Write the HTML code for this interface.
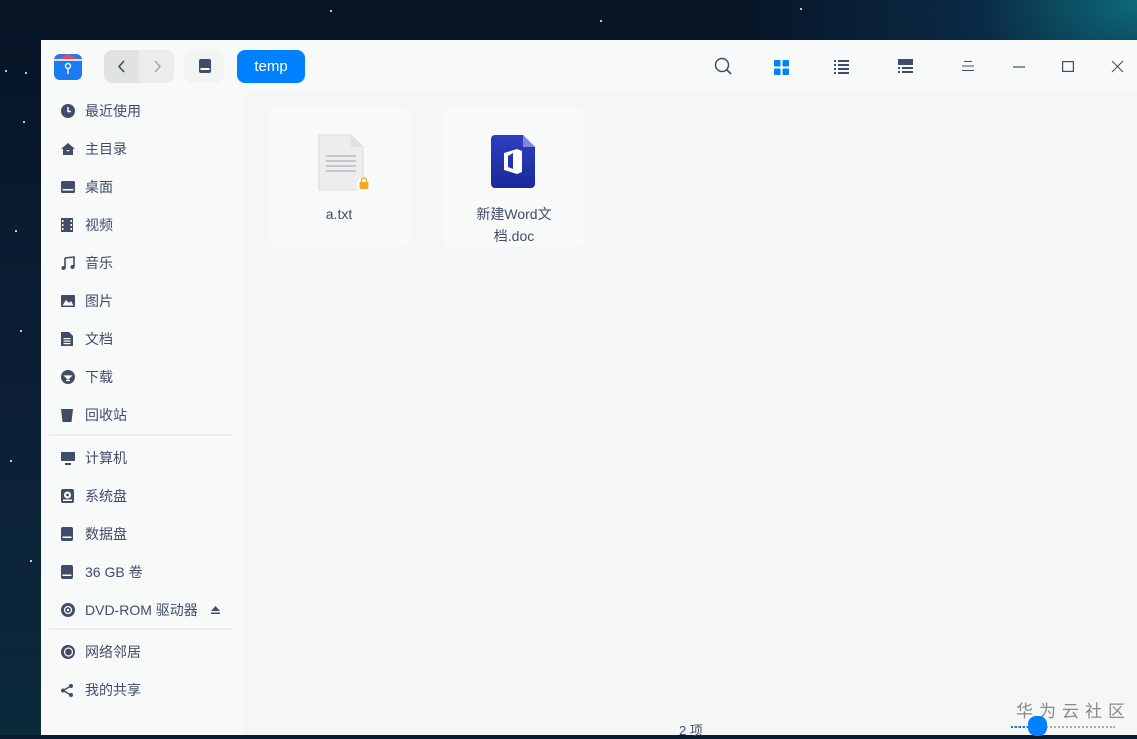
<!DOCTYPE html>
<html><head><meta charset="utf-8"><style>
*{margin:0;padding:0;box-sizing:border-box}
body{width:1137px;height:735px;overflow:hidden;background:#0b1a2e;font-family:"Liberation Sans","Noto Sans CJK SC",sans-serif;position:relative}
.bg{position:absolute;inset:0;background:radial-gradient(ellipse at 100% 0%,#0d6a7a 0,#0b2a45 10%,transparent 25%),linear-gradient(180deg,#071426,#0c2038 60%,#0a2a3a)}
.star{position:absolute;width:2px;height:2px;background:#fff;border-radius:50%}
.win{position:absolute;left:41px;top:40px;right:0;bottom:0;background:#f6f7f7}
.title{position:absolute;left:0;top:0;right:0;height:52px;background:#f8f9f9}
.side{position:absolute;left:0;top:52px;width:201px;bottom:0;background:#f8f9f9}
.main{position:absolute;left:201px;top:52px;right:0;bottom:0;background:#f5f6f6}
.item{position:absolute;left:0;height:38px;width:201px;display:flex;align-items:center;font-size:14px;color:#414d68}
.item svg{position:absolute;left:20px}
.item span{position:absolute;left:44px}
.sep{position:absolute;left:8px;width:183px;height:2px;background:#ececec}
.card{position:absolute;top:15px;width:142px;height:140px;background:#f8f9f9;border-radius:10px}
.lbl{position:absolute;left:0;right:0;text-align:center;font-size:14px;color:#414d68;line-height:22px}
</style></head><body>
<div class="bg"></div>
<div class="star" style="left:23px;top:121px"></div><div class="star" style="left:5px;top:70px"></div><div class="star" style="left:25px;top:72px"></div><div class="star" style="left:20px;top:330px"></div><div class="star" style="left:10px;top:460px"></div><div class="star" style="left:30px;top:560px"></div><div class="star" style="left:15px;top:230px"></div><div class="star" style="left:330px;top:10px"></div><div class="star" style="left:600px;top:20px"></div><div class="star" style="left:800px;top:8px"></div>
<div class="win">
<div class="title">
 <svg style="position:absolute;left:12px;top:11px" width="30" height="30" viewBox="0 0 30 30"><rect x="1" y="3" width="28" height="26" rx="6" fill="#1a7cf0"/><path d="M3 9 L15 3 L27 9Z" fill="#e74c5a"/><rect x="1" y="8" width="28" height="2" fill="#cfe3ff"/><circle cx="15" cy="15" r="2.5" fill="none" stroke="#fff" stroke-width="1.4"/><line x1="15" y1="17.5" x2="15" y2="23" stroke="#fff" stroke-width="1.4"/></svg>
 <div style="position:absolute;left:63px;top:10px;width:70px;height:33px;border-radius:8px;background:#ececec;overflow:hidden"><div style="width:35px;height:33px;background:#e1e2e2"></div>
 <svg style="position:absolute;left:12px;top:10px" width="12" height="13"><path d="M8 1 L3 6.5 L8 12" stroke="#414d68" stroke-width="1.6" fill="none"/></svg>
 <svg style="position:absolute;left:47px;top:10px" width="12" height="13"><path d="M4 1 L9 6.5 L4 12" stroke="#a0a4aa" stroke-width="1.4" fill="none"/></svg></div>
 <div style="position:absolute;left:143px;top:10px;width:40px;height:33px;border-radius:8px;background:#f2f3f3"></div>
 <svg style="position:absolute;left:158px;top:19px" width="12" height="14"><rect x="0" y="0" width="12" height="14" rx="2" fill="#414d68"/><rect x="1.5" y="9" width="9" height="2" fill="#fff"/></svg>
 <div style="position:absolute;left:196px;top:10px;width:68px;height:33px;border-radius:8px;background:#0081ff;color:#fff;font-size:15px;text-align:center;line-height:33px">temp</div>
 <svg style="position:absolute;left:673px;top:17px" width="19" height="19"><circle cx="8" cy="8" r="6.5" stroke="#414d68" stroke-width="1.5" fill="none"/><line x1="12.5" y1="12.5" x2="17" y2="17" stroke="#414d68" stroke-width="1.6"/></svg>
 <svg style="position:absolute;left:733px;top:20px" width="15" height="15"><rect x="0" y="0" width="6.5" height="6.5" rx="1" fill="#0081ff"/><rect x="8.5" y="0" width="6.5" height="6.5" rx="1" fill="#0081ff"/><rect x="0" y="8.5" width="6.5" height="6.5" rx="1" fill="#0081ff"/><rect x="8.5" y="8.5" width="6.5" height="6.5" rx="1" fill="#0081ff"/></svg>
 <svg style="position:absolute;left:793px;top:20px" width="15" height="14" fill="#414d68"><rect x="0" y="0" width="2" height="2"/><rect x="4" y="0" width="11" height="2"/><rect x="0" y="4" width="2" height="2"/><rect x="4" y="4" width="11" height="2"/><rect x="0" y="8" width="2" height="2"/><rect x="4" y="8" width="11" height="2"/><rect x="0" y="12" width="2" height="2"/><rect x="4" y="12" width="11" height="2"/></svg>
 <svg style="position:absolute;left:857px;top:19px" width="15" height="15" fill="#414d68"><rect x="0" y="0" width="15" height="6"/><rect x="0" y="8" width="2" height="2"/><rect x="4" y="8" width="11" height="2"/><rect x="0" y="12" width="2" height="2"/><rect x="4" y="12" width="11" height="2"/></svg>
 <svg style="position:absolute;left:921px;top:20px" width="12" height="12" stroke="#414d68" stroke-width="1"><line x1="2" y1="1.5" x2="10" y2="1.5"/><line x1="0" y1="6" x2="12" y2="6"/><line x1="0" y1="10.5" x2="12" y2="10.5"/></svg>
 <svg style="position:absolute;left:972px;top:26px" width="12" height="2"><line x1="0" y1="1" x2="12" y2="1" stroke="#414d68" stroke-width="1.2"/></svg>
 <svg style="position:absolute;left:1021px;top:21px" width="12" height="11"><rect x=".6" y=".6" width="10.8" height="9.8" stroke="#414d68" stroke-width="1.2" fill="none"/></svg>
 <svg style="position:absolute;left:1070px;top:20px" width="13" height="13" stroke="#414d68" stroke-width="1.1"><line x1="1" y1="1" x2="12" y2="12"/><line x1="12" y1="1" x2="1" y2="12"/></svg>
</div>
<div class="side">
 <div class="item" style="top:0"><svg width="14" height="14"><circle cx="7" cy="7" r="7" fill="#414d68"/><path d="M7 3V7.5H10" stroke="#fff" stroke-width="1.5" fill="none"/></svg><span>最近使用</span></div>
 <div class="item" style="top:38px"><svg width="14" height="14"><path d="M7 1 L14 7 H12 V13 H2 V7 H0Z" fill="#414d68"/><path d="M5 8 Q7 11 9 8" fill="#fff"/></svg><span>主目录</span></div>
 <div class="item" style="top:76px"><svg width="14" height="12"><rect width="14" height="12" rx="1.5" fill="#414d68"/><rect x="1.5" y="8" width="11" height="1.5" fill="#fff"/></svg><span>桌面</span></div>
 <div class="item" style="top:114px"><svg width="12" height="14"><rect width="12" height="14" fill="#414d68"/><g fill="#fff"><rect x="1" y="2" width="1.5" height="2"/><rect x="1" y="6" width="1.5" height="2"/><rect x="1" y="10" width="1.5" height="2"/><rect x="9.5" y="2" width="1.5" height="2"/><rect x="9.5" y="6" width="1.5" height="2"/><rect x="9.5" y="10" width="1.5" height="2"/></g></svg><span>视频</span></div>
 <div class="item" style="top:152px"><svg width="14" height="14"><path d="M4 2 L13 1 V11" stroke="#414d68" stroke-width="1.6" fill="none"/><path d="M4 2V12" stroke="#414d68" stroke-width="1.6"/><circle cx="2.5" cy="12" r="2" fill="#414d68"/><circle cx="11.5" cy="11" r="2" fill="#414d68"/></svg><span>音乐</span></div>
 <div class="item" style="top:190px"><svg width="14" height="12"><rect width="14" height="12" rx="1" fill="#414d68"/><path d="M1.5 10.5 L5 5 L8 8 L10 6 L12.5 10.5Z" fill="#fff"/></svg><span>图片</span></div>
 <div class="item" style="top:228px"><svg width="12" height="14"><path d="M0 0H8L12 4V14H0Z" fill="#414d68"/><g fill="#fff"><rect x="2.5" y="6" width="7" height="1.2"/><rect x="2.5" y="8.5" width="7" height="1.2"/><rect x="2.5" y="11" width="7" height="1.2"/></g></svg><span>文档</span></div>
 <div class="item" style="top:266px"><svg width="14" height="14"><circle cx="7" cy="7" r="7" fill="#414d68"/><path d="M4 6 L7 9 L10 6Z M5 10.5H9" stroke="#fff" stroke-width="1.3" fill="#fff"/></svg><span>下载</span></div>
 <div class="item" style="top:304px"><svg width="12" height="14"><path d="M0 1H12L10.5 14H1.5Z" fill="#414d68"/></svg><span>回收站</span></div>
 <div class="sep" style="top:342px"></div>
 <div class="item" style="top:347px"><svg width="14" height="13"><rect width="14" height="9" rx="1" fill="#414d68"/><rect x="4" y="11" width="6" height="2" fill="#414d68"/></svg><span>计算机</span></div>
 <div class="item" style="top:385px"><svg width="13" height="14"><rect width="13" height="14" rx="2" fill="#414d68"/><circle cx="6.5" cy="6" r="3.5" fill="#fff"/><circle cx="6.5" cy="6" r="1.4" fill="#414d68"/><rect x="2" y="10.5" width="9" height="1.5" fill="#fff"/></svg><span>系统盘</span></div>
 <div class="item" style="top:423px"><svg width="12" height="14"><rect width="12" height="14" rx="2" fill="#414d68"/><rect x="1.5" y="9.5" width="9" height="1.5" fill="#fff"/></svg><span>数据盘</span></div>
 <div class="item" style="top:461px"><svg width="12" height="14"><rect width="12" height="14" rx="2" fill="#414d68"/><rect x="1.5" y="9.5" width="9" height="1.5" fill="#fff"/></svg><span>36 GB 卷</span></div>
 <div class="item" style="top:499px"><svg width="14" height="14"><circle cx="7" cy="7" r="7" fill="#414d68"/><circle cx="7" cy="7" r="3.5" fill="none" stroke="#fff" stroke-width="1.2"/><circle cx="7" cy="7" r="1.2" fill="#fff"/></svg><span>DVD-ROM 驱动器</span><svg style="left:170px" width="9" height="8"><path d="M4.5 0 L9 5H0Z M0 6.5H9V8H0Z" fill="#414d68"/></svg></div>
 <div class="sep" style="top:536px"></div>
 <div class="item" style="top:541px"><svg width="14" height="14"><circle cx="7" cy="7" r="7" fill="#414d68"/><circle cx="7.5" cy="7" r="4" fill="none" stroke="#fff" stroke-width="1.2"/></svg><span>网络邻居</span></div>
 <div class="item" style="top:579px"><svg width="12" height="13"><circle cx="2" cy="6.5" r="2" fill="#414d68"/><circle cx="10" cy="2" r="2" fill="#414d68"/><circle cx="10" cy="11" r="2" fill="#414d68"/><path d="M2 6.5 L10 2 M2 6.5 L10 11" stroke="#414d68" stroke-width="1.5"/></svg><span>我的共享</span></div>
</div>
<div class="main">
 <div class="card" style="left:26px">
  <svg style="position:absolute;left:50px;top:27px" width="55" height="60"><path d="M1 1H33L45 13V56H1Z" fill="#ededed" stroke="#dcdcdc"/><path d="M33 1V13H45" fill="#e0e0e0"/><g stroke="#9aa1ac" stroke-width="1"><line x1="8" y1="22" x2="38" y2="22"/><line x1="8" y1="27" x2="38" y2="27"/><line x1="8" y1="32" x2="38" y2="32"/><line x1="8" y1="37" x2="38" y2="37"/></g><circle cx="46" cy="51" r="7" fill="#fff"/><rect x="41.5" y="48" width="9" height="7" rx="1" fill="#f5a623"/><path d="M43.5 48V46.5A2.5 2.5 0 0 1 48.5 46.5V48" stroke="#f5a623" stroke-width="1.3" fill="none"/></svg>
  <div class="lbl" style="top:96px">a.txt</div>
 </div>
 <div class="card" style="left:201px">
  <svg style="position:absolute;left:48px;top:27px" width="46" height="56"><defs><linearGradient id="g" x1="0" y1="0" x2="0" y2="1"><stop offset="0" stop-color="#2d3fc0"/><stop offset="1" stop-color="#1a2a9a"/></linearGradient></defs><path d="M4 1H32L44 13V50A4 4 0 0 1 40 54H4A4 4 0 0 1 0 50V5A4 4 0 0 1 4 1Z" fill="url(#g)"/><path d="M32 1V13H44" fill="#7c88d8"/><path d="M13 19 L26 15 V40 L13 36Z M17 22 V33 L22 35 V19Z" fill="#fff" fill-rule="evenodd"/><path d="M26 15 L31 17 V38 L26 40Z" fill="#fff"/></svg>
  <div class="lbl" style="top:96px">新建Word文<br>档.doc</div>
 </div>
 <div style="position:absolute;left:437px;top:628px;font-size:13px;color:#414d68">2 项</div>
 <div style="position:absolute;left:774px;top:605px;font-size:17px;color:#8a8a8a;letter-spacing:6px">华为云社区</div>
 <div style="position:absolute;left:769px;top:634px;width:104px;border-top:2px dotted #aab;"></div>
 <div style="position:absolute;left:769px;top:634px;width:18px;border-top:2px dotted #0081ff;"></div>
 <div style="position:absolute;left:786px;top:624px;width:19px;height:20px;border-radius:8px;background:#0081ff"></div>
</div>
</div>
</body></html>
